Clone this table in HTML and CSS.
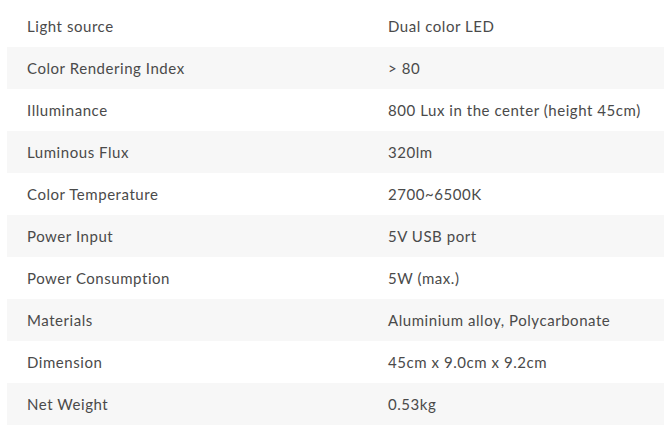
FILE: index.html
```html
<!DOCTYPE html>
<html>
<head>
<meta charset="utf-8">
<link rel="stylesheet" href="styles.css">
</head>
<body>
<div class="specs">
  <div class="row"><div class="k">Light source</div><div class="v">Dual color LED</div></div>
  <div class="row"><div class="k">Color Rendering Index</div><div class="v">&gt; 80</div></div>
  <div class="row"><div class="k">Illuminance</div><div class="v">800 Lux in the center (height 45cm)</div></div>
  <div class="row"><div class="k">Luminous Flux</div><div class="v">320lm</div></div>
  <div class="row"><div class="k">Color Temperature</div><div class="v">2700~6500K</div></div>
  <div class="row"><div class="k">Power Input</div><div class="v">5V USB port</div></div>
  <div class="row"><div class="k">Power Consumption</div><div class="v">5W (max.)</div></div>
  <div class="row"><div class="k">Materials</div><div class="v">Aluminium alloy, Polycarbonate</div></div>
  <div class="row"><div class="k">Dimension</div><div class="v">45cm x 9.0cm x 9.2cm</div></div>
  <div class="row"><div class="k">Net Weight</div><div class="v">0.53kg</div></div>
</div>
</body>
</html>
```
FILE: styles.css
```css
html, body {
  margin: 0;
  padding: 0;
  background: #ffffff;
}
.specs {
  padding: 5px 0 0 7px;
  font-family: "Lato", "Liberation Sans", sans-serif;
  font-size: 15px;
  letter-spacing: 0.55px;
  color: #4a4a4a;
}
.row {
  display: grid;
  grid-template-columns: 361px 1fr;
  height: 42px;
  align-items: center;
}
.row:nth-child(even) {
  background: #f7f7f7;
}
.k, .v {
  padding-left: 20px;
  white-space: nowrap;
}
```
